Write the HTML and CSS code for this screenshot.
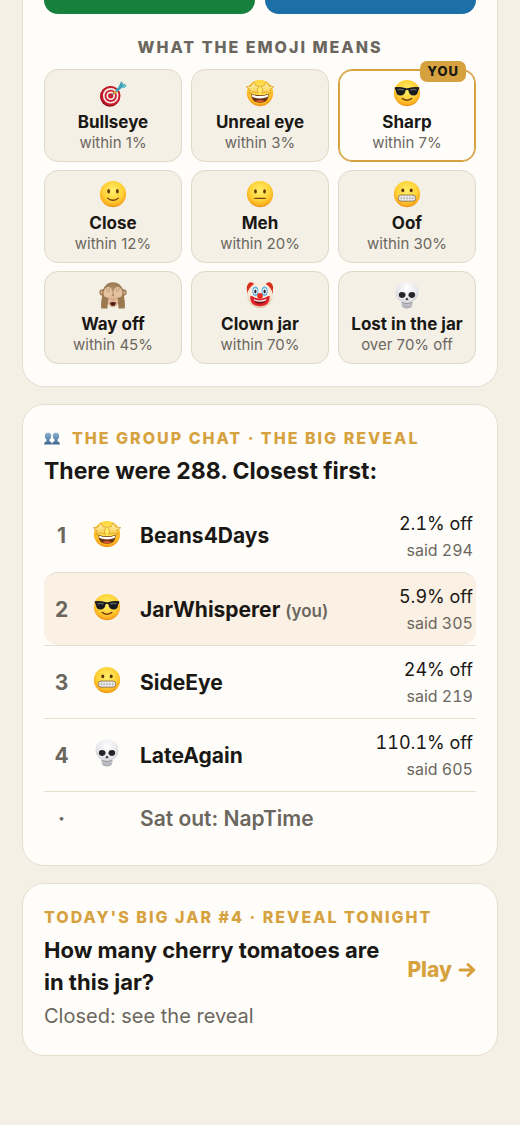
FILE: index.html
```html
<!DOCTYPE html>
<html lang="en">
<head>
  <meta charset="UTF-8">
  <title>Jar results</title>
  <meta name="viewport" content="width=device-width, initial-scale=1.0">
  <link rel="stylesheet" href="styles.css">
</head>
<body>
  <!-- emoji sprite -->
  <svg class="sprite" aria-hidden="true">
    <defs>
      <radialGradient id="face" cx="50%" cy="38%" r="62%">
        <stop offset="0" stop-color="#ffee6b"/>
        <stop offset="0.6" stop-color="#ffd338"/>
        <stop offset="0.88" stop-color="#fbae1e"/>
        <stop offset="1" stop-color="#e88a0c"/>
      </radialGradient>
      <linearGradient id="star" x1="0" y1="0" x2="0" y2="1">
        <stop offset="0" stop-color="#fff6b8"/>
        <stop offset="1" stop-color="#f9cb45"/>
      </linearGradient>
      <radialGradient id="bone" cx="50%" cy="25%" r="75%">
        <stop offset="0" stop-color="#ffffff"/>
        <stop offset="0.6" stop-color="#e6e6ea"/>
        <stop offset="1" stop-color="#a9a9b1"/>
      </radialGradient>
      <radialGradient id="fur" cx="50%" cy="40%" r="65%">
        <stop offset="0" stop-color="#b5946b"/>
        <stop offset="1" stop-color="#8a6a45"/>
      </radialGradient>
      <radialGradient id="skin" cx="50%" cy="40%" r="62%">
        <stop offset="0" stop-color="#fffaf1"/>
        <stop offset="0.75" stop-color="#f7e7d0"/>
        <stop offset="1" stop-color="#d8b48e"/>
      </radialGradient>
      <linearGradient id="bust" x1="0" y1="0" x2="0" y2="1">
        <stop offset="0" stop-color="#8fb4d3"/>
        <stop offset="1" stop-color="#3c6690"/>
      </linearGradient>
    </defs>

    <symbol id="bullseye" viewBox="0 0 32 32">
      <ellipse cx="12.6" cy="20" rx="11.4" ry="11.6" fill="#8f0d19"/>
      <circle cx="13.4" cy="19.2" r="11.2" fill="#c91c2b"/>
      <circle cx="13.4" cy="19.2" r="8.9" fill="#f7f1ee"/>
      <circle cx="13.4" cy="19.2" r="7" fill="#cd2030"/>
      <circle cx="13.4" cy="19.2" r="4.9" fill="#f7f1ee"/>
      <circle cx="13.4" cy="19.2" r="3" fill="#c91c2b"/>
      <path d="M13.6 19 L19 14.6" stroke="#6d5b58" stroke-width="1.2"/>
      <path d="M17.2 16.3 L20.4 13.6" stroke="#d9a43b" stroke-width="3"/>
      <path d="M19.6 14 L26.5 7.4" stroke="#41aebe" stroke-width="3.4"/>
      <path d="M22.4 8.6 L25.4 2.6 L27.6 5.4 L25.6 9 Z" fill="#3f9fb4"/>
      <path d="M25 8.6 L28 5.6 L32 7.6 L29.2 10.4 L24.4 10.6 Z" fill="#63c3cf"/>
      <path d="M21 12.5 L30 5.5" stroke="#2c7f93" stroke-width="0.7"/>
    </symbol>

    <symbol id="starstruck" viewBox="0 0 32 32">
      <circle cx="16" cy="16" r="15" fill="url(#face)"/>
      <path d="M6 16.8 Q16 20.6 26 16.8 Q25.8 27.2 16 27.2 Q6.2 27.2 6 16.8 Z" fill="#6b3413"/>
      <path d="M6.6 17.6 Q16 21.2 25.4 17.6 L24.6 20.6 Q16 23.8 7.4 20.6 Z" fill="#ffffff"/>
      <path d="M10.5 25.4 Q16 22.4 21.5 25.4 Q16 28 10.5 25.4 Z" fill="#d9552f"/>
      <path d="M8.9 3.2 L11.2 7.7 L15.3 8.1 L12.8 11.9 L14 16.4 L8.7 14.6 L4.1 17.2 L4.7 12.2 L0.2 8.8 L6 7.9 Z" fill="url(#star)" stroke="#d28a18" stroke-width="0.7"/>
      <path d="M23.1 3.2 L20.8 7.7 L16.7 8.1 L19.2 11.9 L18 16.4 L23.3 14.6 L27.9 17.2 L27.3 12.2 L31.8 8.8 L26 7.9 Z" fill="url(#star)" stroke="#d28a18" stroke-width="0.7"/>
    </symbol>

    <symbol id="cool" viewBox="0 0 32 32">
      <circle cx="16" cy="16" r="15" fill="url(#face)"/>
      <path d="M10.5 22.2 Q16 26.4 21.5 22.2" fill="none" stroke="#7a4310" stroke-width="1.7" stroke-linecap="round"/>
      <path d="M2 9.5 Q8 8.8 14 10.2 Q16 10.7 18 10.2 Q24 8.8 30 9.5 L29.8 11.6 Q29 12 28.7 13.6 Q28 18.8 23.5 18.8 Q18.5 18.8 17.7 13 Q16 11.8 14.3 13 Q13.5 18.8 8.5 18.8 Q4 18.8 3.3 13.6 Q3 12 2.2 11.6 Z" fill="#191b1e"/>
      <path d="M5 11.4 Q8.5 10.5 12.5 11.7 L11.5 13.4 Q8 12 5.4 13.2 Z M19.5 11.7 Q23.5 10.5 27 11.4 L26.6 13.2 Q23.5 12 20.5 13.4 Z" fill="#5e6468"/>
    </symbol>

    <symbol id="smile" viewBox="0 0 32 32">
      <circle cx="16" cy="16" r="15" fill="url(#face)"/>
      <ellipse cx="11" cy="12.8" rx="1.6" ry="2.5" fill="#6b3d0c"/>
      <ellipse cx="21" cy="12.8" rx="1.6" ry="2.5" fill="#6b3d0c"/>
      <path d="M10 20.8 Q16 25.6 22 20.8" fill="none" stroke="#7a4310" stroke-width="1.5" stroke-linecap="round"/>
    </symbol>

    <symbol id="meh" viewBox="0 0 32 32">
      <circle cx="16" cy="16" r="15" fill="url(#face)"/>
      <ellipse cx="10.8" cy="13" rx="1.6" ry="2.4" fill="#6b3d0c"/>
      <ellipse cx="21.2" cy="13" rx="1.6" ry="2.4" fill="#6b3d0c"/>
      <path d="M10 21 H22" stroke="#7a4310" stroke-width="1.5" stroke-linecap="round"/>
    </symbol>

    <symbol id="grimace" viewBox="0 0 32 32">
      <circle cx="16" cy="16" r="15" fill="url(#face)"/>
      <ellipse cx="11.2" cy="11.8" rx="1.7" ry="2.1" fill="#5d350b"/>
      <ellipse cx="20.8" cy="11.8" rx="1.7" ry="2.1" fill="#5d350b"/>
      <rect x="6" y="17.2" width="20" height="7" rx="3.2" fill="#f7f7f7" stroke="#8a6a3f" stroke-width="1"/>
      <path d="M6.5 20.7 H25.5 M9.5 17.5 V24 M12.7 17.5 V24 M16 17.5 V24 M19.3 17.5 V24 M22.5 17.5 V24" stroke="#a3a3a6" stroke-width="0.7"/>
    </symbol>

    <symbol id="monkey" viewBox="0 0 32 32">
      <circle cx="4" cy="13" r="3.6" fill="#a07e57"/>
      <circle cx="28" cy="13" r="3.6" fill="#a07e57"/>
      <circle cx="4" cy="13" r="2" fill="#dfae8c"/>
      <circle cx="28" cy="13" r="2" fill="#dfae8c"/>
      <ellipse cx="16" cy="14.5" rx="12.2" ry="13" fill="url(#fur)"/>
      <path d="M4.5 13 Q1.6 24 2.6 31.5 H9.8 Q9.4 24 13 18 Z M27.5 13 Q30.4 24 29.4 31.5 H22.2 Q22.6 24 19 18 Z" fill="#9a7850"/>
      <ellipse cx="16" cy="23.5" rx="6" ry="6.6" fill="#e0b797"/>
      <path d="M12.6 24.6 Q16 23.4 19.4 24.6 Q18.8 28.6 16 28.6 Q13.2 28.6 12.6 24.6 Z" fill="#4d1c16"/>
      <path d="M14.6 20.8 L15.3 21.4 M17.4 20.8 L16.7 21.4" stroke="#6d4430" stroke-width="0.8"/>
      <path d="M5 14 Q6 8.5 9 7.2 Q11.5 5.8 13.5 7.8 L15.4 11.5 Q16 15.5 14 18.2 Q9 20.5 6 17.5 Z" fill="#e3c3a2"/>
      <path d="M27 14 Q26 8.5 23 7.2 Q20.5 5.8 18.5 7.8 L16.6 11.5 Q16 15.5 18 18.2 Q23 20.5 26 17.5 Z" fill="#e3c3a2"/>
      <path d="M8.5 8 L10 13 M11.3 7.2 L12.4 12.5 M23.5 8 L22 13 M20.7 7.2 L19.6 12.5" stroke="#b68e69" stroke-width="0.8"/>
    </symbol>

    <symbol id="clown" viewBox="0 0 32 32">
      <path d="M8.5 2.5 Q4 0 2 4 Q0 7 1.3 11.5 Q1 15 4 16 L12 5 Z" fill="#d8301c"/>
      <path d="M23.5 2.5 Q28 0 30 4 Q32 7 30.7 11.5 Q31 15 28 16 L20 5 Z" fill="#d8301c"/>
      <circle cx="16" cy="16.4" r="14.4" fill="url(#skin)"/>
      <ellipse cx="10.7" cy="11.6" rx="3.5" ry="5.4" fill="#5fb4e4"/>
      <ellipse cx="21.3" cy="11.6" rx="3.5" ry="5.4" fill="#5fb4e4"/>
      <ellipse cx="10.7" cy="11.8" rx="2.3" ry="3.6" fill="#ffffff"/>
      <ellipse cx="21.3" cy="11.8" rx="2.3" ry="3.6" fill="#ffffff"/>
      <ellipse cx="10.7" cy="12" rx="1.3" ry="2.3" fill="#262a3c"/>
      <ellipse cx="21.3" cy="12" rx="1.3" ry="2.3" fill="#262a3c"/>
      <path d="M4.8 17.5 Q6.5 16.2 9 18.6 Q16 21.6 23 18.6 Q25.5 16.2 27.2 17.5 Q27.5 28.8 16 28.8 Q4.5 28.8 4.8 17.5 Z" fill="#e0202a"/>
      <path d="M8.5 20.5 Q16 24 23.5 20.5 Q22 25.8 16 25.8 Q10 25.8 8.5 20.5 Z" fill="#6f1010"/>
      <path d="M8.7 20.6 Q16 24 23.3 20.6 L22.7 22.2 Q16 25 9.3 22.2 Z" fill="#ffffff"/>
      <circle cx="16" cy="17" r="3.2" fill="#e52a20"/>
    </symbol>

    <symbol id="skull" viewBox="0 0 32 32">
      <path d="M16 0.8 Q29 0.8 29 13 Q29 17.5 26.8 19.5 Q26 22.6 22.6 23.2 L22 28 Q21 31.5 16 31.5 Q11 31.5 10 28 L9.4 23.2 Q6 22.6 5.2 19.5 Q3 17.5 3 13 Q3 0.8 16 0.8 Z" fill="url(#bone)"/>
      <path d="M10 24.6 Q16 27.2 22 24.6" fill="none" stroke="#8d8d95" stroke-width="1"/>
      <path d="M12.8 26 V29 M16 26.5 V30 M19.2 26 V29" stroke="#a7a7af" stroke-width="0.8"/>
      <path d="M7 14 Q9 11.6 13 13 Q15 14.5 14.2 17.2 Q12.5 20 9 19.2 Q5.8 18 7 14 Z" fill="#26262a"/>
      <path d="M25 14 Q23 11.6 19 13 Q17 14.5 17.8 17.2 Q19.5 20 23 19.2 Q26.2 18 25 14 Z" fill="#26262a"/>
      <path d="M16 18.8 Q18.4 21.3 17.2 22.2 L16 21.5 L14.8 22.2 Q13.6 21.3 16 18.8 Z" fill="#35353a"/>
    </symbol>

    <symbol id="people" viewBox="0 0 32 26">
      <path d="M0 25 Q0 19.5 5 18.5 V15 Q1 12 1.5 6 Q3 1 8 1 Q13 1 14.5 6 Q15 12 11 15 V18.5 Q16 19.5 16 25 Z" fill="url(#bust)"/>
      <path d="M16 25 Q16 19.5 21 18.5 V15 Q17 12 17.5 6 Q19 1 24 1 Q29 1 30.5 6 Q31 12 27 15 V18.5 Q32 19.5 32 25 Z" fill="url(#bust)"/>
    </symbol>
  </svg>

  <main>
    <section class="card card-share">
      <div class="share">
        <button class="share-btn green" aria-label="Share result"></button>
        <button class="share-btn blue" aria-label="Copy result"></button>
      </div>
      <h2 class="legend-title">WHAT THE EMOJI MEANS</h2>
      <ul class="legend">
        <li class="tier"><svg class="emoji"><use href="#bullseye"/></svg><b>Bullseye</b><span>within 1%</span></li>
        <li class="tier"><svg class="emoji"><use href="#starstruck"/></svg><b>Unreal eye</b><span>within 3%</span></li>
        <li class="tier mine"><em class="badge">YOU</em><svg class="emoji"><use href="#cool"/></svg><b>Sharp</b><span>within 7%</span></li>
        <li class="tier"><svg class="emoji"><use href="#smile"/></svg><b>Close</b><span>within 12%</span></li>
        <li class="tier"><svg class="emoji"><use href="#meh"/></svg><b>Meh</b><span>within 20%</span></li>
        <li class="tier"><svg class="emoji"><use href="#grimace"/></svg><b>Oof</b><span>within 30%</span></li>
        <li class="tier"><svg class="emoji"><use href="#monkey"/></svg><b>Way off</b><span>within 45%</span></li>
        <li class="tier"><svg class="emoji"><use href="#clown"/></svg><b>Clown jar</b><span>within 70%</span></li>
        <li class="tier"><svg class="emoji"><use href="#skull"/></svg><b>Lost in the jar</b><span>over 70% off</span></li>
      </ul>
    </section>

    <section class="card">
      <p class="kicker"><svg class="people"><use href="#people"/></svg>THE GROUP CHAT · THE BIG REVEAL</p>
      <h2 class="title title-lg">There were 288. Closest first:</h2>
      <ol class="board">
        <li class="row">
          <span class="rank">1</span>
          <svg class="emoji"><use href="#starstruck"/></svg>
          <span class="name">Beans4Days</span>
          <span class="score">2.1% off<small>said 294</small></span>
        </li>
        <li class="row me">
          <span class="rank">2</span>
          <svg class="emoji"><use href="#cool"/></svg>
          <span class="name">JarWhisperer <small>(you)</small></span>
          <span class="score">5.9% off<small>said 305</small></span>
        </li>
        <li class="row">
          <span class="rank">3</span>
          <svg class="emoji"><use href="#grimace"/></svg>
          <span class="name">SideEye</span>
          <span class="score">24% off<small>said 219</small></span>
        </li>
        <li class="row">
          <span class="rank">4</span>
          <svg class="emoji"><use href="#skull"/></svg>
          <span class="name">LateAgain</span>
          <span class="score">110.1% off<small>said 605</small></span>
        </li>
        <li class="row out">
          <span class="rank">·</span>
          <span></span>
          <span class="name">Sat out: NapTime</span>
        </li>
      </ol>
    </section>

    <section class="card today">
      <div class="today-text">
        <p class="kicker">TODAY'S BIG JAR #4 · REVEAL TONIGHT</p>
        <h2 class="title">How many cherry tomatoes are in this jar?</h2>
        <p class="status">Closed: see the reveal</p>
      </div>
      <a class="play" href="#">Play
        <svg class="arrow" viewBox="0 0 18 16" aria-hidden="true"><path d="M2 8 H15.5 M10 2.5 L15.8 8 L10 13.5"/></svg>
      </a>
    </section>
  </main>
</body>
</html>
```

FILE: styles.css
```css
* {
  box-sizing: border-box;
}

body {
  margin: 0;
  background: #f5f0e6;
  color: #1a1815;
  font-family: Inter, "Liberation Sans", sans-serif;
}

h2, p, ul, ol {
  margin: 0;
  padding: 0;
  list-style: none;
}

.sprite {
  position: absolute;
  width: 0;
  height: 0;
}

main {
  display: flex;
  flex-direction: column;
  gap: 17px;
  padding: 0 22px 70px;
}

.card {
  background: #fffdf9;
  border: 1px solid #e5dfd0;
  border-radius: 22px;
  padding: 21px;
}

.card-share {
  border-top: 0;
  border-radius: 0 0 22px 22px;
  padding-top: 0;
  padding-bottom: 22px;
}

.share {
  display: grid;
  grid-template-columns: 1fr 1fr;
  gap: 10px;
}

.share-btn {
  height: 14px;
  border: 0;
  border-radius: 0 0 14px 14px;
}

.green {
  background: #17803d;
}

.blue {
  background: #1d6fa8;
}

.legend-title {
  margin: 23px 0 11px;
  font-size: 16px;
  font-weight: 800;
  line-height: 21px;
  letter-spacing: 2px;
  text-align: center;
  color: #6b675f;
}

.legend {
  display: grid;
  grid-template-columns: repeat(3, 1fr);
  gap: 8px 9px;
}

.tier {
  position: relative;
  display: flex;
  flex-direction: column;
  align-items: center;
  padding: 9px 4px 8px;
  background: #f5f0e6;
  border: 1px solid #e0d9c9;
  border-radius: 14px;
}

.tier b {
  margin-top: 5px;
  font-size: 17px;
  line-height: 21px;
}

.tier span {
  font-size: 15px;
  line-height: 20px;
  color: #6b675f;
}

.mine {
  background: #fffdf9;
  border-color: #d6a23f;
  box-shadow: inset 0 0 0 1px #d6a23f;
}

.badge {
  position: absolute;
  top: -9px;
  right: 9px;
  padding: 0 7px;
  background: #d6a23f;
  border-radius: 7px;
  font-size: 13px;
  font-style: normal;
  font-weight: 800;
  line-height: 21px;
  letter-spacing: 1px;
}

.emoji {
  width: 28px;
  height: 28px;
}

.kicker {
  display: flex;
  align-items: center;
  font-size: 16px;
  font-weight: 800;
  line-height: 24px;
  letter-spacing: 2px;
  white-space: nowrap;
  color: #d6a23f;
}

.people {
  width: 16px;
  height: 13px;
  margin-right: 12px;
}

.title {
  margin-top: 5px;
  font-size: 22px;
  line-height: 32px;
}

.title-lg {
  font-size: 23px;
}

.board {
  margin-top: 12px;
}

.row {
  display: grid;
  grid-template-columns: 35px 33px 1fr auto;
  column-gap: 14px;
  align-items: center;
  min-height: 73px;
  padding-right: 3px;
  border-top: 1px solid #e5dfd0;
}

.row:first-child {
  border-top: 0;
}

.row .emoji {
  margin-bottom: 4px;
}

.me {
  background: #faf0e3;
  border-radius: 14px;
}

.rank {
  font-size: 21px;
  font-weight: 700;
  text-align: center;
  color: #6b675f;
}

.name {
  font-size: 21px;
  font-weight: 700;
}

.name small {
  font-size: 17px;
  font-weight: 600;
  color: #6b675f;
}

.score {
  font-size: 18px;
  font-variant-numeric: tabular-nums;
  line-height: 28px;
  text-align: right;
}

.score small {
  display: block;
  font-size: 16px;
  line-height: 24px;
  color: #6b675f;
}

.out {
  min-height: 53px;
}

.out .name {
  font-weight: 600;
  color: #6b675f;
}

.today {
  display: flex;
  align-items: center;
  gap: 16px;
}

.today-text {
  flex: 1;
  min-width: 0;
}

.status {
  font-size: 20px;
  line-height: 36px;
  color: #6b675f;
}

.play {
  display: flex;
  align-items: center;
  gap: 6px;
  font-size: 21px;
  font-weight: 800;
  color: #d6a23f;
  text-decoration: none;
  white-space: nowrap;
}

.arrow {
  width: 18px;
  height: 16px;
  fill: none;
  stroke: currentColor;
  stroke-width: 3;
  stroke-linecap: round;
  stroke-linejoin: round;
}
```
